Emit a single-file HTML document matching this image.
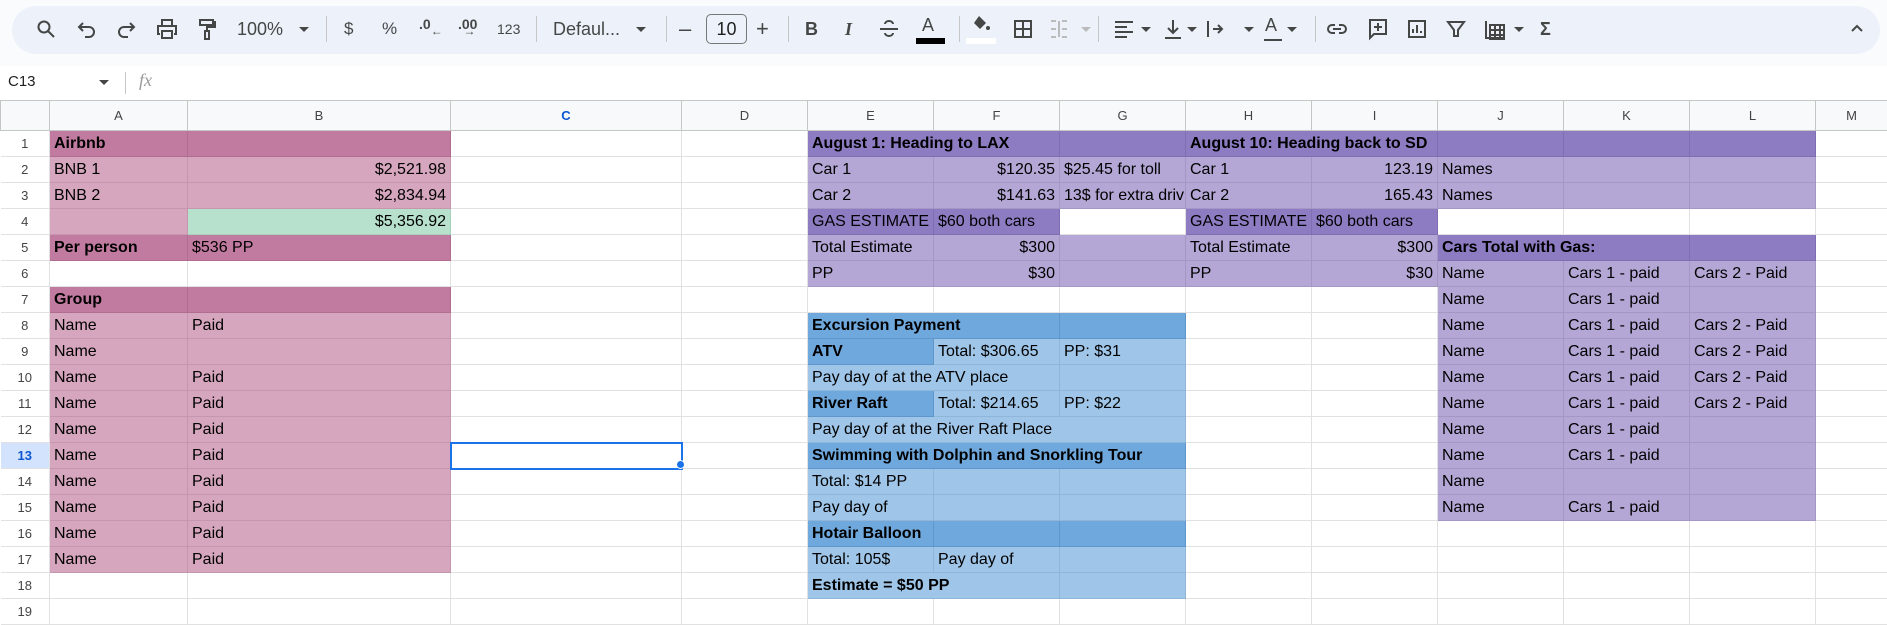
<!DOCTYPE html>
<html><head><meta charset="utf-8">
<style>
*{box-sizing:border-box;margin:0;padding:0}
body{width:1887px;height:620px;overflow:hidden;background:#fff;font-family:"Liberation Sans",Arial,sans-serif;position:relative}
#top{position:absolute;left:0;top:0;width:1887px;height:66px;background:#f9fbfd}
#pill{position:absolute;left:12px;top:6px;width:1868px;height:48px;border-radius:24px;background:#edf2fa}
.ic{position:absolute;top:17px;width:24px;height:24px}
.tx{position:absolute;top:17px;font-size:18px;color:#444746;line-height:24px}
.sep{position:absolute;top:16px;width:1px;height:26px;background:#c7c7c7}
.dd{position:absolute;top:27px;width:0;height:0;border-left:5px solid transparent;border-right:5px solid transparent;border-top:5px solid #444746}
#fbar{position:absolute;top:66px;left:0;width:1887px;height:35px;background:#fff}
table{position:absolute;left:0;top:100px;border-collapse:collapse;table-layout:fixed;width:1887px}
td{border:1px solid #e1e1e1;height:26px;padding:0 4px;font-size:16px;color:#000;white-space:nowrap;overflow:hidden;line-height:24px}
tr.h td{height:30px;background:#f8f9fa;color:#444;font-size:13px;text-align:center;border-color:#c4c7c5}
td.n{background:#fff;color:#444;font-size:13px;text-align:center;padding:0;border-left:none}
td.sel{background:#d3e3fd;color:#0b57d0;font-weight:bold}
.r{text-align:right}
.b{font-weight:bold}
.pd{background:#c27ba0;border-color:#b06d90}
.pl{background:#d5a6bd;border-color:#c596ad}
.g{background:#b7e1cd;border-color:#a6d0bc}
.ud{background:#8e7cc3;border-color:#7f6fb2}
.ul{background:#b4a7d6;border-color:#a497c6}
.bd{background:#6fa8dc;border-color:#6097cb}
.bl{background:#9fc5e8;border-color:#8fb5d8}
</style></head><body>
<div id="top"><div id="pill"></div></div>
<!-- toolbar icons -->
<svg class="ic" style="left:34px" viewBox="0 0 24 24"><circle cx="10" cy="10" r="5.5" fill="none" stroke="#444746" stroke-width="2"/><path d="M14 14l6 6" stroke="#444746" stroke-width="2"/></svg>
<svg class="ic" style="left:75px" viewBox="0 0 24 24"><path d="M8 6L4 10l4 4M4 10h10a5 5 0 0 1 0 10h-4" fill="none" stroke="#444746" stroke-width="2"/></svg>
<svg class="ic" style="left:114px" viewBox="0 0 24 24"><path d="M16 6l4 4-4 4M20 10H10a5 5 0 0 0 0 10h4" fill="none" stroke="#444746" stroke-width="2"/></svg>
<svg class="ic" style="left:155px" viewBox="0 0 24 24"><path d="M7 8V3h10v5M5 17H3V9h18v8h-2M7 14h10v7H7z" fill="none" stroke="#444746" stroke-width="2"/></svg>
<svg class="ic" style="left:195px" viewBox="0 0 24 24"><path d="M5 3h13v5H5zM18 5h2v5h-8v4M10 14h4v8h-4z" fill="none" stroke="#444746" stroke-width="2"/></svg>
<div class="tx" style="left:237px">100%</div><div class="dd" style="left:299px"></div>
<div class="sep" style="left:326px"></div>
<div class="tx" style="left:344px;font-size:17px">$</div>
<div class="tx" style="left:382px;font-size:17px">%</div>
<div class="tx" style="left:419px;font-size:14px;font-weight:bold;top:12px">.0<span style="font-size:12px;position:relative;top:6px">←</span></div>
<div class="tx" style="left:458px;font-size:14px;font-weight:bold;top:12px">.00<span style="font-size:12px;position:relative;top:6px;left:-14px">→</span></div>
<div class="tx" style="left:497px;font-size:14px">123</div>
<div class="sep" style="left:536px"></div>
<div class="tx" style="left:553px">Defaul...</div><div class="dd" style="left:636px"></div>
<div class="sep" style="left:666px"></div>
<div class="tx" style="left:679px;font-size:22px">–</div>
<div style="position:absolute;left:706px;top:14px;width:41px;height:30px;border:1px solid #747775;border-radius:5px;font-size:18px;text-align:center;line-height:28px;color:#1f1f1f">10</div>
<div class="tx" style="left:756px;font-size:22px">+</div>
<div class="sep" style="left:788px"></div>
<div class="tx" style="left:805px;font-weight:bold">B</div>
<div class="tx" style="left:845px;font-style:italic;font-family:'Liberation Serif',serif;font-weight:bold">I</div>
<svg class="ic" style="left:877px" viewBox="0 0 24 24"><path d="M3 12h18M16 7a4 3 0 0 0-8 0M8 16a4 3 0 0 0 8 0" fill="none" stroke="#444746" stroke-width="2"/></svg>
<div class="tx" style="left:922px;top:13px">A</div><div style="position:absolute;left:916px;top:38px;width:29px;height:6px;background:#000"></div>
<div class="sep" style="left:959px"></div>
<svg class="ic" style="left:969px;top:13px" viewBox="0 0 24 24"><path d="M10 3l7 7-6 6-6-6z" fill="#444746"/><circle cx="19" cy="15" r="2" fill="#444746"/></svg>
<div style="position:absolute;left:966px;top:38px;width:30px;height:6px;background:#fff"></div>
<svg class="ic" style="left:1011px" viewBox="0 0 24 24"><path d="M4 4h16v16H4zM12 4v16M4 12h16" fill="none" stroke="#444746" stroke-width="2"/></svg>
<svg class="ic" style="left:1047px" viewBox="0 0 24 24"><path d="M4 4h5M4 20h5M15 4h5M15 20h5M12 4v16M4 12h5M15 12h5" fill="none" stroke="#bbb" stroke-width="2"/></svg><div class="dd" style="left:1081px;border-top-color:#bbb"></div>
<div class="sep" style="left:1098px"></div>
<svg class="ic" style="left:1112px" viewBox="0 0 24 24"><path d="M3 5h18M3 10h12M3 15h18M3 20h12" stroke="#444746" stroke-width="2"/></svg><div class="dd" style="left:1141px"></div>
<svg class="ic" style="left:1161px" viewBox="0 0 24 24"><path d="M12 3v13M7 11l5 5 5-5M4 21h16" fill="none" stroke="#444746" stroke-width="2"/></svg><div class="dd" style="left:1187px"></div>
<svg class="ic" style="left:1203px" viewBox="0 0 24 24"><path d="M5 4v16M10 12h9M15 8l4 4-4 4" fill="none" stroke="#444746" stroke-width="2"/></svg><div class="dd" style="left:1244px"></div>
<div class="tx" style="left:1265px;top:13px">A</div><div style="position:absolute;left:1264px;top:39px;width:18px;height:2px;background:#444746"></div><div class="dd" style="left:1287px"></div>
<div class="sep" style="left:1315px"></div>
<svg class="ic" style="left:1325px" viewBox="0 0 24 24"><path d="M10 8H7a4 4 0 0 0 0 8h3M14 8h3a4 4 0 0 1 0 8h-3M8 12h8" fill="none" stroke="#444746" stroke-width="2"/></svg>
<svg class="ic" style="left:1366px" viewBox="0 0 24 24"><path d="M4 3h16v14H8l-4 4zM12 6v8M8 10h8" fill="none" stroke="#444746" stroke-width="2"/></svg>
<svg class="ic" style="left:1405px" viewBox="0 0 24 24"><path d="M4 4h16v16H4zM8 16v-4M12 16V8M16 16v-2" fill="none" stroke="#444746" stroke-width="2"/></svg>
<svg class="ic" style="left:1444px" viewBox="0 0 24 24"><path d="M4 5h16l-6 8v6h-4v-6z" fill="none" stroke="#444746" stroke-width="2"/></svg>
<svg class="ic" style="left:1483px" viewBox="0 0 24 24"><path d="M3 4v17h17M7 8h14v14H7zM7 13h14M7 18h14M12 8v14M17 8v14" fill="none" stroke="#444746" stroke-width="2"/></svg><div class="dd" style="left:1514px"></div>
<div class="tx" style="left:1540px;font-weight:bold">Σ</div>
<svg class="ic" style="left:1845px" viewBox="0 0 24 24"><path d="M7 14l5-5 5 5" fill="none" stroke="#444746" stroke-width="2"/></svg>
<!-- formula bar -->
<div id="fbar"></div>
<div style="position:absolute;left:8px;top:73px;font-size:15px;color:#1f1f1f">C13</div>
<div class="dd" style="left:99px;top:80px"></div>
<div style="position:absolute;left:125px;top:72px;width:1px;height:22px;background:#c7c7c7"></div>
<div style="position:absolute;left:139px;top:70px;font-size:18px;color:#999;font-style:italic;font-family:'Liberation Serif',serif">fx</div>
<table>
<colgroup><col style="width:49px"><col style="width:138px"><col style="width:263px"><col style="width:231px"><col style="width:126px"><col style="width:126px"><col style="width:126px"><col style="width:126px"><col style="width:126px"><col style="width:126px"><col style="width:126px"><col style="width:126px"><col style="width:126px"><col style="width:72px"></colgroup>
<tr class="h"><td style="background:#f8f9fa"></td><td>A</td><td>B</td><td class="sel" style="color:#0b57d0">C</td><td>D</td><td>E</td><td>F</td><td>G</td><td>H</td><td>I</td><td>J</td><td>K</td><td>L</td><td>M</td></tr>
<tr><td class="n">1</td><td class="pd b">Airbnb</td><td class="pd"></td><td></td><td></td><td class="ud b" colspan="2">August 1: Heading to LAX</td><td class="ud"></td><td class="ud b" colspan="2">August 10: Heading back to SD</td><td class="ud"></td><td class="ud"></td><td class="ud"></td><td></td></tr>
<tr><td class="n">2</td><td class="pl">BNB 1</td><td class="pl r">$2,521.98</td><td></td><td></td><td class="ul">Car 1</td><td class="ul r">$120.35</td><td class="ul">$25.45 for toll</td><td class="ul">Car 1</td><td class="ul r">123.19</td><td class="ul">Names</td><td class="ul"></td><td class="ul"></td><td></td></tr>
<tr><td class="n">3</td><td class="pl">BNB 2</td><td class="pl r">$2,834.94</td><td></td><td></td><td class="ul">Car 2</td><td class="ul r">$141.63</td><td class="ul" style="padding-right:0">13$ for extra driv</td><td class="ul">Car 2</td><td class="ul r">165.43</td><td class="ul">Names</td><td class="ul"></td><td class="ul"></td><td></td></tr>
<tr><td class="n">4</td><td class="pl"></td><td class="g r">$5,356.92</td><td></td><td></td><td class="ud" style="padding-right:0">GAS ESTIMATE</td><td class="ud">$60 both cars</td><td></td><td class="ud" style="padding-right:0">GAS ESTIMATE</td><td class="ud">$60 both cars</td><td></td><td></td><td></td><td></td></tr>
<tr><td class="n">5</td><td class="pd b">Per person</td><td class="pd">$536 PP</td><td></td><td></td><td class="ul">Total Estimate</td><td class="ul r">$300</td><td class="ul"></td><td class="ul">Total Estimate</td><td class="ul r">$300</td><td class="ud b" colspan="2">Cars Total with Gas:</td><td class="ud"></td><td></td></tr>
<tr><td class="n">6</td><td></td><td></td><td></td><td></td><td class="ul">PP</td><td class="ul r">$30</td><td class="ul"></td><td class="ul">PP</td><td class="ul r">$30</td><td class="ul">Name</td><td class="ul">Cars 1 - paid</td><td class="ul">Cars 2 - Paid</td><td></td></tr>
<tr><td class="n">7</td><td class="pd b">Group</td><td class="pd"></td><td></td><td></td><td></td><td></td><td></td><td></td><td></td><td class="ul">Name</td><td class="ul">Cars 1 - paid</td><td class="ul"></td><td></td></tr>
<tr><td class="n">8</td><td class="pl">Name</td><td class="pl">Paid</td><td></td><td></td><td class="bd b" colspan="2">Excursion Payment</td><td class="bd"></td><td></td><td></td><td class="ul">Name</td><td class="ul">Cars 1 - paid</td><td class="ul">Cars 2 - Paid</td><td></td></tr>
<tr><td class="n">9</td><td class="pl">Name</td><td class="pl"></td><td></td><td></td><td class="bd b">ATV</td><td class="bl">Total: $306.65</td><td class="bl">PP: $31</td><td></td><td></td><td class="ul">Name</td><td class="ul">Cars 1 - paid</td><td class="ul">Cars 2 - Paid</td><td></td></tr>
<tr><td class="n">10</td><td class="pl">Name</td><td class="pl">Paid</td><td></td><td></td><td class="bl" colspan="2">Pay day of at the ATV place</td><td class="bl"></td><td></td><td></td><td class="ul">Name</td><td class="ul">Cars 1 - paid</td><td class="ul">Cars 2 - Paid</td><td></td></tr>
<tr><td class="n">11</td><td class="pl">Name</td><td class="pl">Paid</td><td></td><td></td><td class="bd b">River Raft</td><td class="bl">Total: $214.65</td><td class="bl">PP: $22</td><td></td><td></td><td class="ul">Name</td><td class="ul">Cars 1 - paid</td><td class="ul">Cars 2 - Paid</td><td></td></tr>
<tr><td class="n">12</td><td class="pl">Name</td><td class="pl">Paid</td><td></td><td></td><td class="bl" colspan="3">Pay day of at the River Raft Place</td><td></td><td></td><td class="ul">Name</td><td class="ul">Cars 1 - paid</td><td class="ul"></td><td></td></tr>
<tr><td class="n sel">13</td><td class="pl">Name</td><td class="pl">Paid</td><td style="border:2px solid #1a73e8"></td><td></td><td class="bd b" colspan="3">Swimming with Dolphin and Snorkling Tour</td><td></td><td></td><td class="ul">Name</td><td class="ul">Cars 1 - paid</td><td class="ul"></td><td></td></tr>
<tr><td class="n">14</td><td class="pl">Name</td><td class="pl">Paid</td><td></td><td></td><td class="bl">Total: $14 PP</td><td class="bl"></td><td class="bl"></td><td></td><td></td><td class="ul">Name</td><td class="ul"></td><td class="ul"></td><td></td></tr>
<tr><td class="n">15</td><td class="pl">Name</td><td class="pl">Paid</td><td></td><td></td><td class="bl">Pay day of</td><td class="bl"></td><td class="bl"></td><td></td><td></td><td class="ul">Name</td><td class="ul">Cars 1 - paid</td><td class="ul"></td><td></td></tr>
<tr><td class="n">16</td><td class="pl">Name</td><td class="pl">Paid</td><td></td><td></td><td class="bd b">Hotair Balloon</td><td class="bd"></td><td class="bd"></td><td></td><td></td><td></td><td></td><td></td><td></td></tr>
<tr><td class="n">17</td><td class="pl">Name</td><td class="pl">Paid</td><td></td><td></td><td class="bl">Total: 105$</td><td class="bl">Pay day of</td><td class="bl"></td><td></td><td></td><td></td><td></td><td></td><td></td></tr>
<tr><td class="n">18</td><td></td><td></td><td></td><td></td><td class="bl b" colspan="2">Estimate = $50 PP</td><td class="bl"></td><td></td><td></td><td></td><td></td><td></td><td></td></tr>
<tr><td class="n">19</td><td></td><td></td><td></td><td></td><td></td><td></td><td></td><td></td><td></td><td></td><td></td><td></td><td></td></tr>
</table>
<div style="position:absolute;left:676px;top:460px;width:9px;height:9px;border-radius:50%;background:#1a73e8;border:1px solid #fff"></div>
</body></html>
